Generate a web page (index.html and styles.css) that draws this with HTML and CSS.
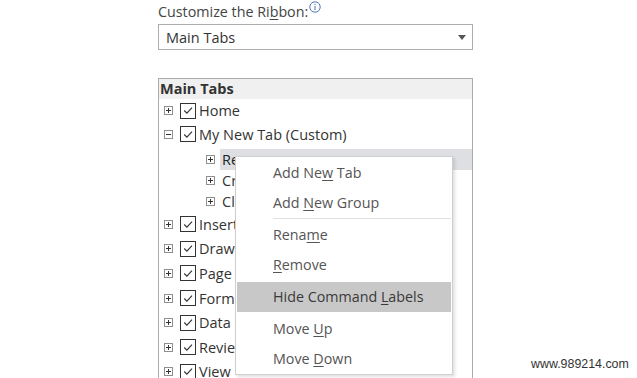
FILE: index.html
```html
<!DOCTYPE html>
<html>
<head>
<meta charset="utf-8">
<link rel="stylesheet" href="styles.css">
</head>
<body>
<div class="page">
  <div class="label">Customize the Ri<u>b</u>bon:<svg class="info" width="12" height="12" viewBox="0 0 12 12"><circle cx="6" cy="6" r="5.2" fill="none" stroke="#4a78b8" stroke-width="1"/><rect x="5.5" y="5" width="1" height="4" fill="#4a78b8"/><rect x="5.5" y="3" width="1" height="1" fill="#4a78b8"/></svg></div>
  <div class="select"><span>Main Tabs</span><span class="arrow"></span></div>
  <div class="tree">
    <div class="tree-head">Main Tabs</div>
    <div class="row first"><span class="exp plus"></span><span class="cb"><svg width="15" height="15" viewBox="0 0 15 15"><path d="M3.5 7.5 L6.3 10.3 L11.8 4.3" fill="none" stroke="#333" stroke-width="1.2"/></svg></span><span class="txt">Home</span></div>
    <div class="row open"><span class="exp minus"></span><span class="cb"><svg width="15" height="15" viewBox="0 0 15 15"><path d="M3.5 7.5 L6.3 10.3 L11.8 4.3" fill="none" stroke="#333" stroke-width="1.2"/></svg></span><span class="txt">My New Tab (Custom)</span></div>
    <div class="child sel"><span class="exp plus"></span><span class="ctxt">Re</span></div>
    <div class="child"><span class="exp plus"></span><span class="ctxt">Cr</span></div>
    <div class="child"><span class="exp plus"></span><span class="ctxt">Cl</span></div>
    <div class="row"><span class="exp plus"></span><span class="cb"><svg width="15" height="15" viewBox="0 0 15 15"><path d="M3.5 7.5 L6.3 10.3 L11.8 4.3" fill="none" stroke="#333" stroke-width="1.2"/></svg></span><span class="txt">Insert</span></div>
    <div class="row"><span class="exp plus"></span><span class="cb"><svg width="15" height="15" viewBox="0 0 15 15"><path d="M3.5 7.5 L6.3 10.3 L11.8 4.3" fill="none" stroke="#333" stroke-width="1.2"/></svg></span><span class="txt">Draw</span></div>
    <div class="row"><span class="exp plus"></span><span class="cb"><svg width="15" height="15" viewBox="0 0 15 15"><path d="M3.5 7.5 L6.3 10.3 L11.8 4.3" fill="none" stroke="#333" stroke-width="1.2"/></svg></span><span class="txt">Page</span></div>
    <div class="row"><span class="exp plus"></span><span class="cb"><svg width="15" height="15" viewBox="0 0 15 15"><path d="M3.5 7.5 L6.3 10.3 L11.8 4.3" fill="none" stroke="#333" stroke-width="1.2"/></svg></span><span class="txt">Form</span></div>
    <div class="row"><span class="exp plus"></span><span class="cb"><svg width="15" height="15" viewBox="0 0 15 15"><path d="M3.5 7.5 L6.3 10.3 L11.8 4.3" fill="none" stroke="#333" stroke-width="1.2"/></svg></span><span class="txt">Data</span></div>
    <div class="row"><span class="exp plus"></span><span class="cb"><svg width="15" height="15" viewBox="0 0 15 15"><path d="M3.5 7.5 L6.3 10.3 L11.8 4.3" fill="none" stroke="#333" stroke-width="1.2"/></svg></span><span class="txt">Revie</span></div>
    <div class="row"><span class="exp plus"></span><span class="cb"><svg width="15" height="15" viewBox="0 0 15 15"><path d="M3.5 7.5 L6.3 10.3 L11.8 4.3" fill="none" stroke="#333" stroke-width="1.2"/></svg></span><span class="txt">View</span></div>
  </div>
</div>
<div class="menu">
  <div class="item">Add Ne<u>w</u> Tab</div>
  <div class="item">Add <u>N</u>ew Group</div>
  <div class="sep vis"></div>
  <div class="item">Rena<u>m</u>e</div>
  <div class="item"><u>R</u>emove</div>
  <div class="sep"></div>
  <div class="item hi">Hide Command <u>L</u>abels</div>
  <div class="sep"></div>
  <div class="item">Move <u>U</u>p</div>
  <div class="item">Move <u>D</u>own</div>
</div>
<div class="watermark">www.989214.com</div>
</body>
</html>
```

FILE: styles.css
```css
html, body {
  margin: 0;
  padding: 0;
  background: #fff;
  overflow: hidden;
}
body {
  width: 637px;
  height: 378px;
  position: relative;
  font-family: "Open Sans", "Noto Sans", sans-serif;
  font-size: 14px;
  color: #333;
}
u {
  text-decoration: underline;
  text-underline-offset: 2px;
}
.page {
  display: flex;
  flex-direction: column;
  padding-left: 158px;
  width: 315px;
  height: 378px;
  overflow: hidden;
}
.label {
  height: 20px;
  line-height: 20px;
  padding-top: 2px;
  margin-bottom: 2px;
  color: #444;
  font-size: 14.3px;
  display: flex;
  align-items: flex-start;
  flex-shrink: 0;
}
.info {
  margin-left: 1px;
  margin-top: -1px;
}
.select {
  height: 24px;
  border: 1px solid #adadad;
  display: flex;
  align-items: center;
  justify-content: space-between;
  padding: 0 6px 0 7px;
  color: #333;
  font-size: 14.5px;
  flex-shrink: 0;
}
.arrow {
  width: 0;
  height: 0;
  border-left: 4.5px solid transparent;
  border-right: 4.5px solid transparent;
  border-top: 5px solid #555;
  margin-top: 1px;
}
.tree {
  margin-top: 28px;
  border: 1px solid #acacac;
  border-bottom: none;
  flex: 1;
  min-height: 0;
  overflow: hidden;
  display: flex;
  flex-direction: column;
}
.tree-head {
  height: 20px;
  line-height: 20px;
  background: #f0f0f0;
  font-weight: bold;
  padding-left: 1px;
  color: #333;
  font-size: 14.5px;
  flex-shrink: 0;
}
.row {
  height: 24.6px;
  display: flex;
  align-items: center;
  padding-left: 5px;
  flex-shrink: 0;
}
.row.first {
  height: 23px;
}
.row.open {
  height: 24px;
  margin-bottom: 3px;
}
.exp {
  width: 7px;
  height: 7px;
  border: 1px solid #8f8f8f;
  position: relative;
  flex-shrink: 0;
}
.exp::before {
  content: "";
  position: absolute;
  left: 1px;
  top: 3px;
  width: 5px;
  height: 1px;
  background: #333;
}
.exp.plus::after {
  content: "";
  position: absolute;
  left: 3px;
  top: 1px;
  width: 1px;
  height: 5px;
  background: #333;
}
.cb {
  width: 16px;
  height: 16px;
  margin-left: 7px;
  box-sizing: border-box;
  border: 1px solid #333;
  display: flex;
  align-items: center;
  justify-content: center;
  flex-shrink: 0;
}
.cb svg {
  display: block;
}
.txt {
  margin-left: 3px;
  font-size: 14.5px;
}
.child {
  height: 21px;
  display: flex;
  align-items: center;
  padding-left: 47px;
  flex-shrink: 0;
}
.ctxt {
  margin-left: 5px;
  padding-left: 2px;
  flex: 1;
  height: 21px;
  line-height: 21px;
  font-size: 14.5px;
}
.child.sel .ctxt {
  background: #dedfe3;
  color: #222;
}
.menu {
  position: absolute;
  left: 235px;
  top: 156px;
  width: 214px;
  border: 1px solid #cfcfcf;
  background: #fff;
  box-shadow: 2px 2px 3px rgba(0,0,0,0.12);
  padding: 1px 1px 0 1px;
  display: flex;
  flex-direction: column;
}
.item {
  height: 30px;
  line-height: 30px;
  padding-left: 36px;
  color: #555;
  font-size: 14.3px;
}
.item.hi {
  background: #c8c8c8;
  color: #3a3a3a;
}
.sep {
  height: 2px;
}
.sep.vis {
  margin-left: 36px;
  border-top: 1px solid #e0e0e0;
  height: 1px;
}
.watermark {
  position: absolute;
  left: 531px;
  top: 357px;
  font-family: "Liberation Sans", Arial, sans-serif;
  font-size: 12.4px;
  color: #333;
}
```
